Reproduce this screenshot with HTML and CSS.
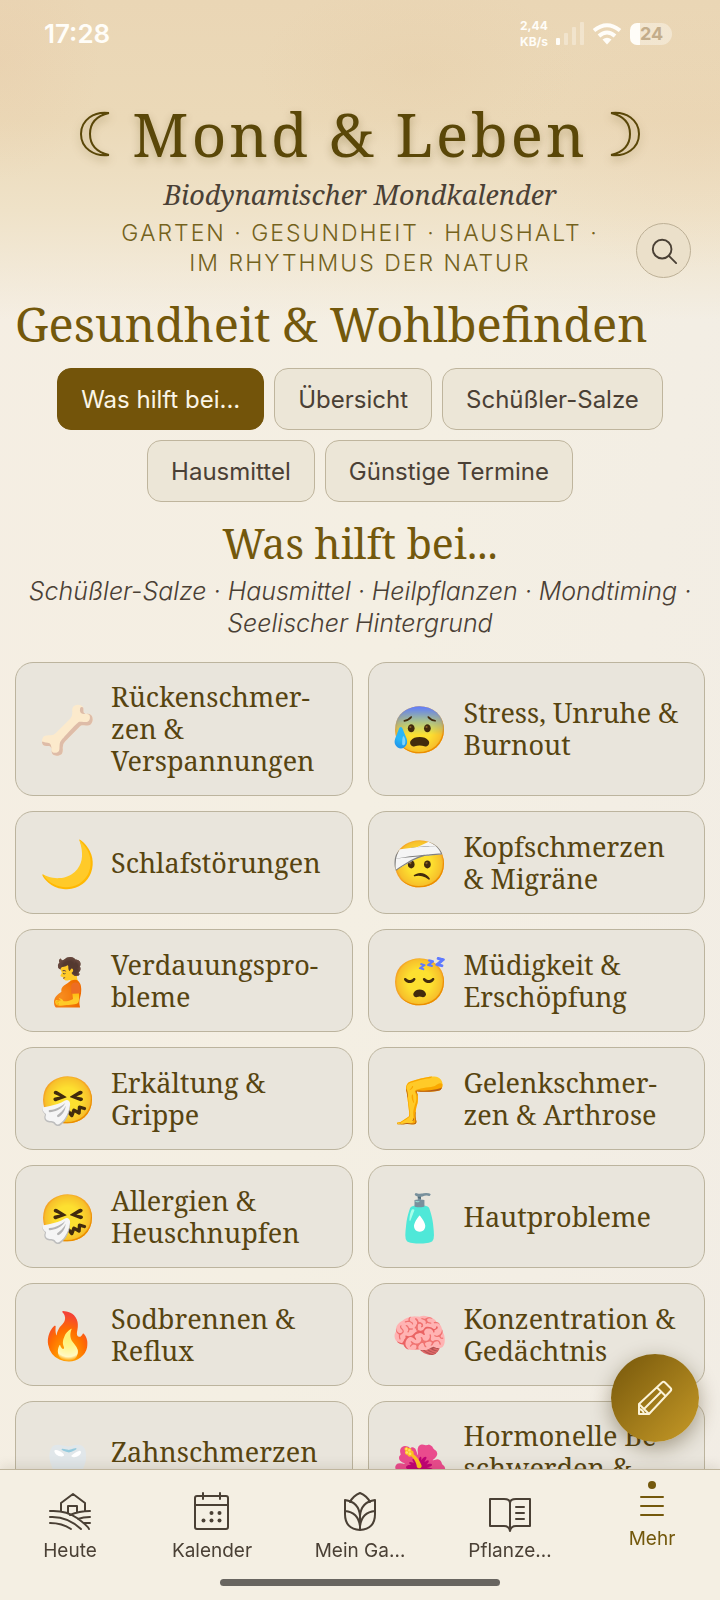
FILE: index.html
```html
<!DOCTYPE html>
<html lang="de">
<head>
<meta charset="utf-8">
<meta name="viewport" content="width=device-width, initial-scale=1">
<title>Mond &amp; Leben</title>
<link rel="stylesheet" href="styles.css">
</head>
<body>
<div class="status">
  <time class="clock">17:28</time>
  <div class="status-right">
    <span class="net">2,44<br>KB/s</span>
    <svg class="signal" viewBox="0 0 28 24" aria-hidden="true"><rect x="0" y="16" width="4" height="7" rx="1"/><g opacity=".35"><rect x="8" y="11" width="4" height="12" rx="1"/><rect x="16" y="5" width="4" height="18" rx="1"/><rect x="24" y="0" width="4" height="23" rx="1"/></g></svg>
    <svg class="wifi" viewBox="0 0 30 22" aria-hidden="true"><path d="M2 7.5Q15-3 28 7.5M7 13Q15 6 23 13" fill="none" stroke="currentColor" stroke-width="4"/><path d="M10.500 16.500Q15 13 19.500 16.500L15 21.500Z"/></svg>
    <span class="battery"><span>24</span></span>
  </div>
</div>

<header class="hero">
  <h1 class="brand">
    <svg class="moon" viewBox="0 0 32 46" aria-hidden="true"><path d="M30 2C15 0 2 9 2 23s13 23 28 21M30 2C17 5 11 13 11 23s6 18 19 21"/></svg>
    <span>Mond &amp; Leben</span>
    <svg class="moon" viewBox="0 0 32 46" aria-hidden="true"><path d="M2 2C17 0 30 9 30 23S17 46 2 44M2 2C15 5 21 13 21 23S15 41 2 44"/></svg>
  </h1>
  <p class="subtitle">Biodynamischer Mondkalender</p>
  <p class="tagline">GARTEN · GESUNDHEIT · HAUSHALT · <br>IM RHYTHMUS DER NATUR</p>
  <button class="search" type="button" aria-label="Suche">
    <svg viewBox="0 0 30 30" aria-hidden="true"><circle cx="13" cy="13" r="10"/><path d="M20 20l8 8"/></svg>
  </button>
</header>

<main>
  <h2>Gesundheit &amp; Wohlbefinden</h2>
  <div class="tabs">
    <button class="tab active" type="button">Was hilft bei...</button>
    <button class="tab" type="button">Übersicht</button>
    <button class="tab" type="button">Schüßler-Salze</button>
    <button class="tab" type="button">Hausmittel</button>
    <button class="tab" type="button">Günstige Termine</button>
  </div>
  <h3>Was hilft bei...</h3>
  <p class="intro">Schüßler-Salze · Hausmittel · Heilpflanzen · Mondtiming · Seelischer Hintergrund</p>
  <div class="cards">
    <button class="card" type="button"><span class="emoji flipped">🦴</span><span>Rückenschmer&shy;zen &amp; Verspannungen</span></button>
    <button class="card" type="button"><span class="emoji">😰</span><span>Stress, Unruhe &amp; Burnout</span></button>
    <button class="card" type="button"><span class="emoji">🌙</span><span>Schlafstörungen</span></button>
    <button class="card" type="button"><span class="emoji">🤕</span><span>Kopfschmerzen &amp; Migräne</span></button>
    <button class="card" type="button"><span class="emoji">🫄</span><span>Verdauungspro&shy;bleme</span></button>
    <button class="card" type="button"><span class="emoji">😴</span><span>Müdigkeit &amp; Erschöpfung</span></button>
    <button class="card" type="button"><span class="emoji">🤧</span><span>Erkältung &amp; Grippe</span></button>
    <button class="card" type="button"><span class="emoji">🦵</span><span>Gelenkschmer&shy;zen &amp; Arthrose</span></button>
    <button class="card" type="button"><span class="emoji">🤧</span><span>Allergien &amp; Heuschnupfen</span></button>
    <button class="card" type="button"><span class="emoji">🧴</span><span>Hautprobleme</span></button>
    <button class="card" type="button"><span class="emoji">🔥</span><span>Sodbrennen &amp; Reflux</span></button>
    <button class="card" type="button"><span class="emoji">🧠</span><span>Konzentration &amp; Gedächtnis</span></button>
    <button class="card" type="button"><span class="emoji">🦷</span><span>Zahnschmerzen &amp; Zahnfleisch</span></button>
    <button class="card" type="button"><span class="emoji">🌺</span><span>Hormonelle Be&shy;schwerden &amp; Wechseljahre</span></button>
  </div>
</main>

<button class="fab" type="button" aria-label="Notiz schreiben">
  <svg viewBox="0 0 36 36" aria-hidden="true"><path d="M2 24L25 2.500Q26.500 1 28 2.500L33.500 8Q35 9.500 33.500 11L12 34H2ZM2 24L12 34M20 7.500L28.500 16M24 12L7 29M2 29Q6 29.500 7 34"/></svg>
</button>

<nav class="bottom">
  <a href="#heute"><svg viewBox="0 0 44 44" aria-hidden="true"><path d="M13 21V13L25 4L37 13V21M20 23V16H29V22M2 21Q18 20 29 28T41 39M42 21Q31 21 22 25M2 27Q19 26 33 39M42 27Q35 27 30 29M2 33Q14 33 23 39M42 33H36"/></svg><span>Heute</span></a>
  <a href="#kalender"><svg viewBox="0 0 44 44" aria-hidden="true"><rect x="5" y="6" width="33" height="33" rx="2"/><path d="M5 15H38M13 3V9M30 3V9"/><g class="dots"><circle cx="21.500" cy="23" r="2"/><circle cx="29.500" cy="23" r="2"/><circle cx="13.500" cy="30.500" r="2"/><circle cx="21.500" cy="30.500" r="2"/><circle cx="29.500" cy="30.500" r="2"/></g></svg><span>Kalender</span></a>
  <a href="#garten"><svg viewBox="0 0 44 44" aria-hidden="true"><path d="M12 12Q15 6 22 3Q29 6 32 12M22 40V26Q21 12 7 10V24Q7 39 22 40Q37 39 37 24V10Q23 12 22 26M7 21Q20 22 22 36M37 21Q24 22 22 36"/></svg><span>Mein Ga…</span></a>
  <a href="#pflanzen"><svg viewBox="0 0 44 44" aria-hidden="true"><path d="M22 41Q21 36 16 36H2V9H16Q22 9 22 13Q22 9 28 9H42V36H28Q23 36 22 41ZM22 13V40M28 17H36M28 23H36M28 29H36"/></svg><span>Pflanze…</span></a>
  <a href="#mehr" class="current"><svg viewBox="0 0 24 24" aria-hidden="true"><path d="M1 3H23M1 12H23M1 21H23"/></svg><span>Mehr</span></a>
  <div class="gesture"></div>
</nav>
</body>
</html>
```
FILE: styles.css
```css
* { box-sizing: border-box; }
body {
  margin: 0;
  height: 100vh;
  overflow: hidden;
  color: #4a4035;
  font-family: Inter, "Liberation Sans", sans-serif;
  background:
    radial-gradient(ellipse 160px 90px at 58% 70px, rgba(226, 196, 155, .2), transparent),
    radial-gradient(ellipse 200px 130px at 96% 140px, rgba(232, 200, 165, .2), transparent),
    radial-gradient(ellipse 100px 120px at 0% 60px, rgba(232, 200, 165, .3), transparent),
    linear-gradient(#ead6b5 0, #ebd9b8 120px, #efe2c8 210px, rgba(243, 236, 218, 0) 320px),
    linear-gradient(100deg, #f5eee3 0, #f4efe3 50%, #f2ede5 100%);
}
h1, h2, h3, p { margin: 0; font-weight: 400; }
h1, h2, h3, .subtitle, .card { font-family: "Noto Serif", "DejaVu Serif", serif; }
button { color: inherit; font: inherit; }

.status {
  display: flex;
  justify-content: space-between;
  align-items: center;
  height: 67px;
  padding: 0 48px 0 44px;
  color: #fffdf8;
}
.clock { font-size: 26px; font-weight: 600; }
.status-right { display: flex; align-items: center; gap: 8px; }
.net { font-size: 12px; font-weight: 700; line-height: 16px; }
.signal { width: 28px; height: 24px; fill: currentColor; }
.wifi { width: 30px; height: 22px; fill: currentColor; }
.battery {
  padding-left: 10px;
  width: 42px;
  height: 22px;
  border-radius: 7px 11px 11px 7px;
  background: linear-gradient(90deg, #fffdf8 10px, rgba(255, 253, 248, .4) 10px);
  color: #c3ad8b;
  font-size: 18px;
  font-weight: 700;
  line-height: 22px;
}

.hero { position: relative; padding-top: 24px; text-align: center; }
.brand {
  display: flex;
  justify-content: center;
  align-items: center;
  gap: 21px;
  color: #5a4708;
  font-size: 60px;
  line-height: 86px;
  letter-spacing: 3px;
  text-shadow: 0 4px 8px rgba(90, 71, 8, .3);
}
.moon {
  width: 32px;
  height: 46px;
  fill: none;
  stroke: currentColor;
  stroke-width: 2;
  stroke-linejoin: round;
  filter: drop-shadow(0 4px 4px rgba(90, 71, 8, .3));
}
.subtitle { font-size: 27px; line-height: 36px; font-style: italic; }
.tagline {
  margin-top: 5px;
  color: #74621c;
  font-size: 23px;
  font-weight: 350;
  line-height: 30px;
  letter-spacing: 2px;
}
.search {
  position: absolute;
  right: 29px;
  bottom: 0;
  display: grid;
  place-items: center;
  width: 55px;
  height: 55px;
  padding: 0;
  border: 1px solid #bdb096;
  border-radius: 50%;
  background: #ebe0ca;
}
.search svg { width: 28px; height: 28px; fill: none; stroke: #4a4035; stroke-width: 2; stroke-linecap: round; }

main { padding: 12px 15px 0; }
h2 { color: #73580c; font-size: 47px; line-height: 68px; }
.tabs { display: flex; flex-wrap: wrap; justify-content: center; gap: 10px; margin-top: 10px; }
.tab {
  height: 62px;
  padding: 0 23px;
  border: 1px solid #bfb59d;
  border-radius: 14px;
  background: #ece6d7;
  font-size: 24px;
}
.tab.active { border-color: #73540a; background: #73540a; color: #fbf5e6; }
h3 { margin-top: 11px; color: #73580c; font-size: 41px; line-height: 60px; text-align: center; }
.intro { margin-top: 2px; font-size: 25px; font-weight: 300; line-height: 32px; font-style: italic; text-align: center; }
.cards { display: grid; grid-template-columns: 1fr 1fr; gap: 15px; margin-top: 23px; }
.card {
  display: flex;
  align-items: center;
  gap: 15px;
  min-width: 0;
  min-height: 103px;
  padding: 18px 16px 18px 23px;
  border: 1px solid #bcb49e;
  border-radius: 18px;
  background: #e9e5dc;
  color: #574410;
  font-size: 27px;
  line-height: 32px;
  text-align: left;
}
.emoji { flex: none; width: 57px; padding-top: 2px; font-family: "Noto Color Emoji", sans-serif; font-size: 46px; line-height: 60px; }
.flipped { transform: scaleX(-1); }

.fab {
  position: fixed;
  right: 21px;
  bottom: 158px;
  display: grid;
  place-items: center;
  width: 88px;
  height: 88px;
  padding: 0;
  border: 0;
  border-radius: 50%;
  background: linear-gradient(135deg, #76570b, #c69a27);
  box-shadow: 0 6px 20px rgba(60, 45, 10, .4);
}
.fab svg { width: 36px; height: 36px; fill: none; stroke: #fbf3d8; stroke-width: 2; stroke-linejoin: round; }

.bottom {
  position: fixed;
  inset: auto 0 0 0;
  display: grid;
  grid-template-columns: 140fr 144fr 152fr 148fr 136fr;
  align-items: start;
  padding-bottom: 14px;
  border-top: 1px solid #bfb59d;
  background: #f4efe3;
  box-shadow: 0 -2px 12px rgba(60, 45, 10, .12);
}
.bottom a {
  display: flex;
  flex-direction: column;
  align-items: center;
  gap: 1px;
  padding-top: 20px;
  color: #4a4035;
  font-size: 19px;
  line-height: 32px;
  text-decoration: none;
}
.bottom svg { width: 44px; height: 44px; fill: none; stroke: currentColor; stroke-width: 2; stroke-linecap: round; stroke-linejoin: round; }
.bottom .dots { fill: currentColor; stroke: none; }
.bottom .current { gap: 5px; padding-top: 11px; color: #73580c; }
.bottom .current::before { content: ""; width: 8px; height: 8px; border-radius: 50%; background: currentColor; }
.bottom .current svg { width: 24px; height: 24px; }
.gesture { grid-column: 1 / -1; justify-self: center; width: 39%; height: 7px; margin-top: 12px; border-radius: 4px; background: #686560; }
```
